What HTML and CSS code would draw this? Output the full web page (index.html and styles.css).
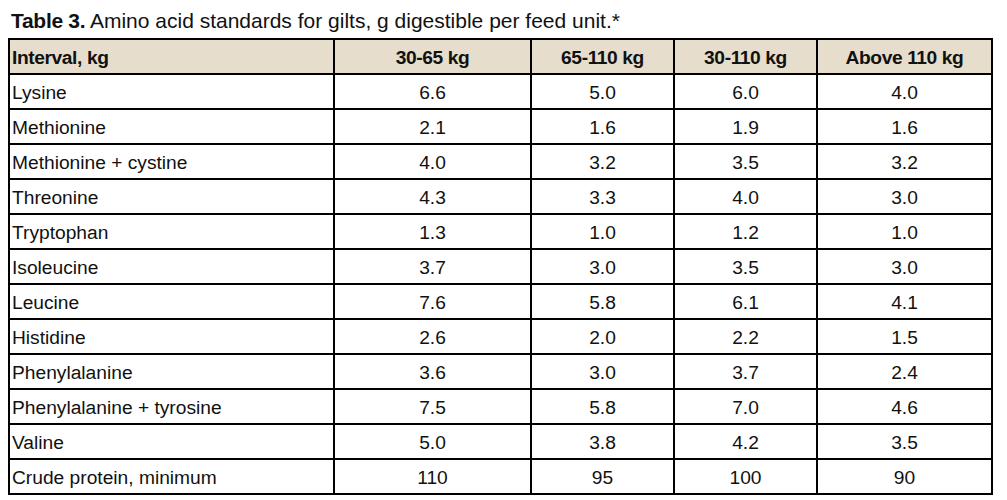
FILE: index.html
```html
<!DOCTYPE html>
<html>
<head>
<meta charset="utf-8">
<link rel="stylesheet" href="styles.css">
</head>
<body>
<div class="page">
  <p class="caption"><span class="caption-label">Table 3.</span> Amino acid standards for gilts, g digestible per feed unit.*</p>
  <table class="std">
    <colgroup>
      <col class="c1"><col class="c2"><col class="c3"><col class="c4"><col class="c5">
    </colgroup>
    <thead>
      <tr><th class="name">Interval, kg</th><th>30-65 kg</th><th>65-110 kg</th><th>30-110 kg</th><th>Above 110 kg</th></tr>
    </thead>
    <tbody>
      <tr><td class="name">Lysine</td><td>6.6</td><td>5.0</td><td>6.0</td><td>4.0</td></tr>
      <tr><td class="name">Methionine</td><td>2.1</td><td>1.6</td><td>1.9</td><td>1.6</td></tr>
      <tr><td class="name">Methionine + cystine</td><td>4.0</td><td>3.2</td><td>3.5</td><td>3.2</td></tr>
      <tr><td class="name">Threonine</td><td>4.3</td><td>3.3</td><td>4.0</td><td>3.0</td></tr>
      <tr><td class="name">Tryptophan</td><td>1.3</td><td>1.0</td><td>1.2</td><td>1.0</td></tr>
      <tr><td class="name">Isoleucine</td><td>3.7</td><td>3.0</td><td>3.5</td><td>3.0</td></tr>
      <tr><td class="name">Leucine</td><td>7.6</td><td>5.8</td><td>6.1</td><td>4.1</td></tr>
      <tr><td class="name">Histidine</td><td>2.6</td><td>2.0</td><td>2.2</td><td>1.5</td></tr>
      <tr><td class="name">Phenylalanine</td><td>3.6</td><td>3.0</td><td>3.7</td><td>2.4</td></tr>
      <tr><td class="name">Phenylalanine + tyrosine</td><td>7.5</td><td>5.8</td><td>7.0</td><td>4.6</td></tr>
      <tr><td class="name">Valine</td><td>5.0</td><td>3.8</td><td>4.2</td><td>3.5</td></tr>
      <tr><td class="name">Crude protein, minimum</td><td>110</td><td>95</td><td>100</td><td>90</td></tr>
    </tbody>
  </table>
</div>
</body>
</html>
```
FILE: styles.css
```css
html, body {
  margin: 0;
  padding: 0;
  background: #ffffff;
}
.page {
  padding: 0 0 0 8px;
  font-family: "Liberation Sans", Arial, sans-serif;
  color: #111111;
}
.caption {
  margin: 0;
  padding: 9px 0 0 3px;
  height: 38px;
  box-sizing: border-box;
  font-size: 21px;
  line-height: 24px;
}
.caption-label {
  font-weight: bold;
  letter-spacing: -0.3px;
}
.std {
  border-collapse: collapse;
  width: 985px;
  font-size: 19.2px;
}
.c1 { width: 325px; }
.c2 { width: 197px; }
.c3 { width: 143px; }
.c4 { width: 143px; }
.c5 { width: 175px; }
.std th, .std td {
  border: 2px solid #000000;
  height: 35px;
  padding: 3px 2px 0 2px;
  text-align: center;
  vertical-align: middle;
  box-sizing: border-box;
}
.std th {
  background: #e6ddcc;
  font-weight: bold;
  letter-spacing: -0.4px;
}
.std .name {
  text-align: left;
}
```
